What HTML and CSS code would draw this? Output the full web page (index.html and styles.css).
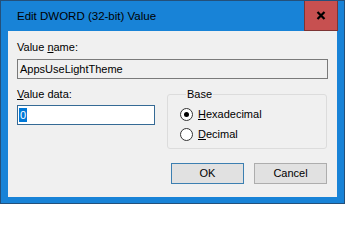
FILE: index.html
```html
<!DOCTYPE html>
<html>
<head>
<meta charset="utf-8">
<link rel="stylesheet" href="styles.css">
</head>
<body>
<div class="window">
  <div class="titlebar">
    <span class="title">Edit DWORD (32-bit) Value</span>
    <div class="close">
      <svg width="10" height="9" viewBox="0 0 10 9"><path d="M1.5 1 L8.5 8 M8.5 1 L1.5 8" stroke="#000" stroke-width="2.2" fill="none"/></svg>
    </div>
  </div>
  <div class="client">
    <div class="label">Value <u>n</u>ame:</div>
    <div class="textbox readonly">AppsUseLightTheme</div>
    <div class="row">
      <div class="datacol">
        <div class="label"><u>V</u>alue data:</div>
        <div class="textbox focused"><span class="sel">0</span></div>
      </div>
      <fieldset class="group">
        <legend>Base</legend>
        <div class="radio"><span class="circle checked"></span><span><u>H</u>exadecimal</span></div>
        <div class="radio"><span class="circle"></span><span><u>D</u>ecimal</span></div>
      </fieldset>
    </div>
    <div class="buttons">
      <div class="btn default">OK</div>
      <div class="btn">Cancel</div>
    </div>
  </div>
</div>
</body>
</html>
```
FILE: styles.css
```css
html, body {
  margin: 0;
  padding: 0;
}
body {
  width: 345px;
  height: 204px;
  overflow: hidden;
  font-family: "Liberation Sans", Arial, sans-serif;
  font-size: 11px;
  color: #000;
}
.window {
  box-sizing: border-box;
  width: 345px;
  height: 204px;
  background: #1883d7;
  border: 1px solid #24507a;
  display: flex;
  flex-direction: column;
}
.titlebar {
  flex: none;
  height: 30px;
  display: flex;
  align-items: center;
  justify-content: space-between;
  padding-left: 16px;
  padding-right: 6px;
}
.title {
  font-size: 11.5px;
  color: #000;
}
.close {
  box-sizing: border-box;
  width: 34px;
  height: 30px;
  background: #c75050;
  border: 1px solid #7c3434;
  border-top: none;
  display: flex;
  align-items: center;
  justify-content: center;
}
.client {
  box-sizing: border-box;
  flex: 1;
  margin: 0 7px 6px 7px;
  background: #f0f0f0;
  padding: 10px 10px 0 9px;
}
.label {
  height: 13px;
  line-height: 13px;
}
.textbox {
  box-sizing: border-box;
  height: 20px;
  line-height: 18px;
  padding-left: 2px;
  border: 1px solid #7a7a7a;
  margin-top: 5px;
}
.readonly {
  background: #f0f0f0;
  width: 311px;
}
.row {
  display: flex;
  margin-top: 9px;
  gap: 12px;
}
.datacol {
  width: 138px;
}
.datacol .textbox {
  margin-top: 4px;
}
.focused {
  background: #fff;
  border-color: #356a95;
  padding-left: 1px;
}
.sel {
  background: #0078d7;
  color: #fff;
  padding: 1px 1px;
}
.group {
  box-sizing: border-box;
  width: 160px;
  margin: 0;
  padding: 5px 0 6px 12px;
  border: 1px solid #dcdcdc;
  border-radius: 3px;
}
.group legend {
  padding: 0 1px;
  margin-left: 6px;
  line-height: 13px;
}
.radio {
  display: flex;
  align-items: center;
  height: 16px;
  gap: 5px;
}
.radio + .radio {
  margin-top: 4px;
}
.circle {
  box-sizing: border-box;
  width: 13px;
  height: 13px;
  border: 1px solid #333;
  border-radius: 50%;
  background: #fff;
  display: flex;
  align-items: center;
  justify-content: center;
}
.circle.checked::after {
  content: "";
  width: 5px;
  height: 5px;
  border-radius: 50%;
  background: #000;
}
.buttons {
  display: flex;
  justify-content: flex-end;
  gap: 10px;
  margin-top: 14px;
}
.btn {
  box-sizing: border-box;
  width: 73px;
  height: 21px;
  line-height: 19px;
  text-align: center;
  background: #e1e1e1;
  border: 1px solid #adadad;
}
.btn.default {
  border-color: #3c7fb1;
}
```
